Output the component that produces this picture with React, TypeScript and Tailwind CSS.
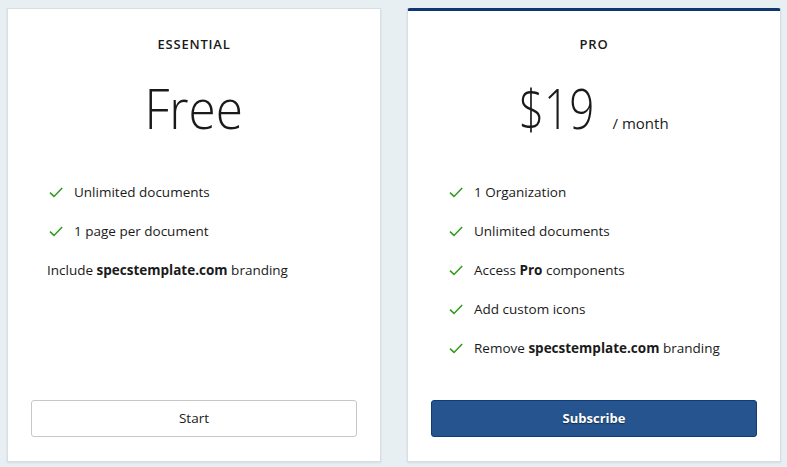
import React from "react";

const Check = () => (
  <svg width="16" height="16" viewBox="0 0 16 16" className="shrink-0">
    <path d="M2 8.6 L6 12.4 L14.2 4" fill="none" stroke="#34991c" strokeWidth="1.5" />
  </svg>
);

const Feature = ({ children }: { children: React.ReactNode }) => (
  <li className="flex items-center gap-[10px] h-[20px]">
    <Check />
    <span>{children}</span>
  </li>
);

export default function App() {
  return (
    <div
      className="w-[787px] h-[467px] bg-[#e8eff3] flex gap-[26px] pl-[7px] pt-[8px] text-[#1a1a1a]"
      style={{ fontFamily: '"Open Sans", "Noto Sans", sans-serif' }}
    >
      <div className="w-[374px] h-[454px] bg-white border border-[#d7dee3] shadow-[0_1px_2px_rgba(0,0,0,0.08)] flex flex-col pt-[25px] px-[23px] pb-[24px]">
        <div className="text-center text-[13px] font-semibold tracking-[0.06em] leading-[20px]">ESSENTIAL</div>
        <div className="flex justify-center h-[60px] mt-[24px]">
          <span className="text-[55px] font-light leading-[60px] scale-x-[0.9]">Free</span>
        </div>
        <ul className="mt-[44px] flex flex-col gap-[19px] text-[13.5px] pl-[17px]">
          <Feature>Unlimited documents</Feature>
          <Feature>1 page per document</Feature>
          <li className="h-[20px] -ml-[1px]">
            Include <b className="font-bold">specstemplate.com</b> branding
          </li>
        </ul>
        <button className="mt-auto h-[37px] w-full border border-[#c6c6cf] rounded-[3px] bg-white text-[13.5px] font-medium">
          Start
        </button>
      </div>
      <div className="w-[374px] h-[454px] bg-white border border-[#d7dee3] border-t-[3px] border-t-[#0d3672] rounded-t-[3px] shadow-[0_1px_2px_rgba(0,0,0,0.08)] flex flex-col pt-[23px] px-[23px] pb-[24px]">
        <div className="text-center text-[13px] font-semibold tracking-[0.06em] leading-[20px]">PRO</div>
        <div className="flex items-baseline justify-center h-[60px] mt-[24px]">
          <span className="text-[55px] font-light leading-[60px] scale-x-[0.8] origin-left mr-[-18px]">$19</span>
          <span className="text-[15px] leading-none ml-[17px]">/ month</span>
        </div>
        <ul className="mt-[44px] flex flex-col gap-[19px] text-[13.5px] pl-[17px]">
          <Feature>1 Organization</Feature>
          <Feature>Unlimited documents</Feature>
          <Feature>
            Access <b className="font-bold">Pro</b> components
          </Feature>
          <Feature>Add custom icons</Feature>
          <Feature>
            Remove <b className="font-bold">specstemplate.com</b> branding
          </Feature>
        </ul>
        <button className="mt-auto h-[37px] w-full border border-[#0f3b78] rounded-[3px] bg-[#25548f] text-white text-[13px] font-bold [text-shadow:0_1px_1px_rgba(0,0,0,0.5)]">
          Subscribe
        </button>
      </div>
    </div>
  );
}
